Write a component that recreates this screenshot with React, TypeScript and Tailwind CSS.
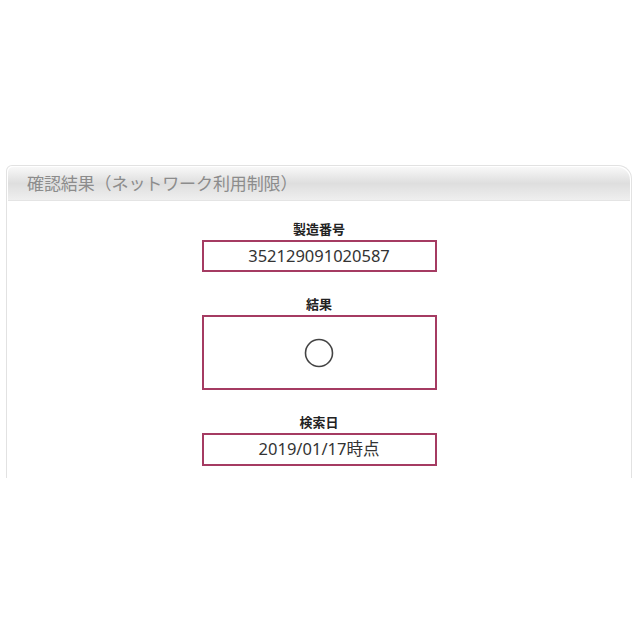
export default function App() {
  const font = { fontFamily: '"Noto Sans", "Noto Sans CJK JP", sans-serif' };

  return (
    <div className="w-[640px] h-[640px] bg-white" style={font}>
      <div className="h-[165px]" />
      <div className="ml-[6px] w-[626px] h-[313px] border-x border-t border-[#e2e2e2] rounded-tl-[6px] rounded-tr-[14px] bg-white">
        <div className="h-[34px] mx-[1px] mt-[1px] rounded-tl-[5px] rounded-tr-[13px] bg-gradient-to-b from-[#f8f8f8] via-[#dedede] to-[#efefef] border-b border-[#e4e4e4] flex items-center pl-[19px]">
          <span className="text-[17px] text-[#8c8c8c] tracking-[-0.1px]">
            確認結果（ネットワーク利用制限）
          </span>
        </div>

        <div className="flex flex-col items-center pt-[21px]">
          <div className="text-[13px] font-bold text-[#222] leading-[14px]">製造番号</div>
          <div className="mt-[4px] w-[235px] h-[32px] border-2 border-[#a53b62] flex items-center justify-center text-[16.5px] text-[#333]">
            352129091020587
          </div>

          <div className="mt-[25px] text-[13px] font-bold text-[#222] leading-[14px]">結果</div>
          <div className="mt-[4px] w-[235px] h-[75px] border-2 border-[#a53b62] flex items-center justify-center">
            <svg width="30" height="30" viewBox="0 0 30 30">
              <circle cx="15" cy="15" r="13.5" fill="none" stroke="#444" strokeWidth="1.6" />
            </svg>
          </div>

          <div className="mt-[25px] text-[13px] font-bold text-[#222] leading-[14px]">検索日</div>
          <div className="mt-[4px] w-[235px] h-[33px] border-2 border-[#a53b62] flex items-center justify-center text-[16.5px] text-[#333]">
            2019/01/17時点
          </div>
        </div>
      </div>
    </div>
  );
}
